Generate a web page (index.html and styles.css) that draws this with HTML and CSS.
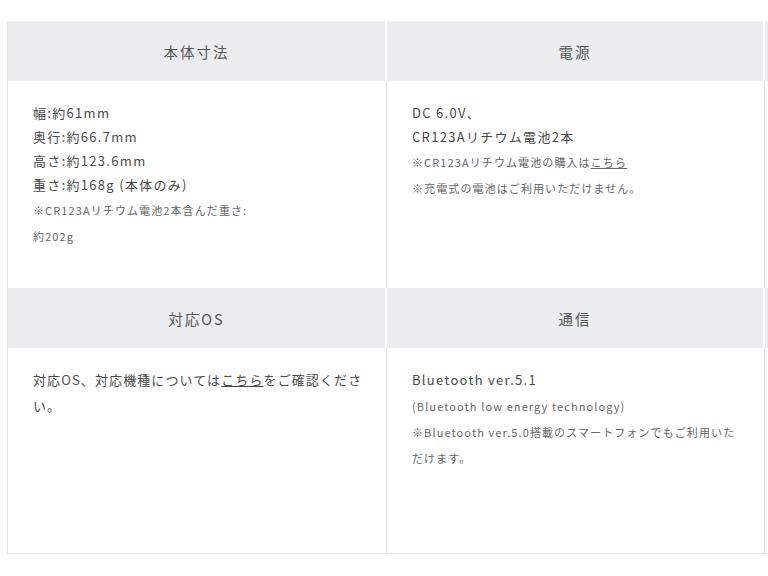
FILE: index.html
```html
<!DOCTYPE html>
<html lang="ja">
<head>
<meta charset="utf-8">
<link rel="stylesheet" href="styles.css">
</head>
<body>
<div class="page">
  <div class="spec">
    <div class="head">本体寸法</div>
    <div class="head">電源</div>
    <div class="head"></div>

    <div class="cell">
      <p class="main">幅:約61mm<br>奥行:約66.7mm<br>高さ:約123.6mm<br>重さ:約168g (本体のみ)</p>
      <p class="note">※CR123Aリチウム電池2本含んだ重さ:<br>約202g</p>
    </div>
    <div class="cell">
      <p class="main">DC 6.0V、<br>CR123Aリチウム電池2本</p>
      <p class="note">※CR123Aリチウム電池の購入は<a href="#">こちら</a><br>※充電式の電池はご利用いただけません。</p>
    </div>
    <div class="cell"></div>

    <div class="head">対応OS</div>
    <div class="head">通信</div>
    <div class="head"></div>

    <div class="cell cell-low">
      <p class="main tight">対応OS、対応機種については<a href="#">こちら</a>をご確認ください。</p>
    </div>
    <div class="cell cell-low">
      <p class="main">Bluetooth ver.5.1</p>
      <p class="note">(Bluetooth low energy technology)<br>※Bluetooth ver.5.0搭載のスマートフォンでもご利用いただけます。</p>
    </div>
    <div class="cell cell-low"></div>
  </div>
</div>
</body>
</html>
```
FILE: styles.css
```css
html, body {
  margin: 0;
  padding: 0;
  background: #ffffff;
}
body {
  font-family: "Noto Sans CJK JP", "Noto Sans", sans-serif;
  color: #4a4a4a;
  width: 768px;
  height: 576px;
  overflow: hidden;
}
.page {
  padding: 21px 0 0 7px;
  width: 761px;
  overflow: hidden;
}
.spec {
  display: grid;
  grid-template-columns: 379px 378px 378px;
  grid-template-rows: 60px 207px 60px 205px;
  border-left: 1px solid #e4e4e6;
  border-bottom: 1px solid #e4e4e6;
  width: 1135px;
}
.head {
  background: #ebecee;
  border-right: 2px solid #ffffff;
  box-shadow: 1px 0 0 #e4e4e6;
  display: flex;
  align-items: center;
  justify-content: center;
  font-size: 14.5px;
  letter-spacing: 0.14em;
  color: #555555;
}
.cell {
  border-right: 1px solid #e4e4e6;
  padding: 20px 20px 0 25px;
}
.cell-low {
  padding-top: 19px;
}
.main {
  margin: 0;
  font-size: 13px;
  line-height: 24px;
  letter-spacing: 0.1em;
  color: #4a4a4a;
}
.cell-low .main {
  line-height: 26px;
}
.main.tight {
  letter-spacing: 0.085em;
}
.note {
  margin: 0;
  font-size: 11px;
  line-height: 26px;
  letter-spacing: 0.1em;
  color: #666666;
}
a {
  color: inherit;
  text-decoration: underline;
}
```
